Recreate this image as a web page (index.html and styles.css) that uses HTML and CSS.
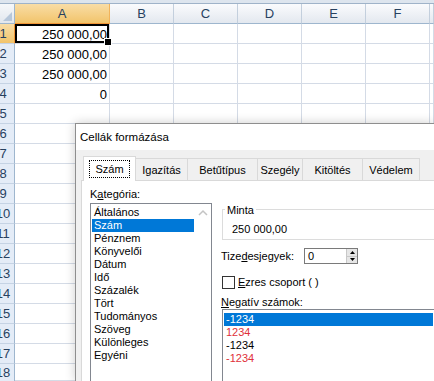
FILE: index.html
```html
<!DOCTYPE html>
<html lang="hu">
<head>
    <meta charset="UTF-8">
    <title>Cellák formázása</title>
    <link rel="stylesheet" href="styles.css">
</head>
<body>
    <div class="topbar"></div>

    <div class="sheet">
        <div class="corner"><svg width="14" height="19"><polygon points="12,8 12,17 3,17" fill="#b7c7da"/></svg></div>
        <div class="col sel">A</div><div class="col">B</div><div class="col">C</div><div class="col">D</div><div class="col">E</div><div class="col">F</div><div class="col"></div>

        <div class="row sel">1</div><div class="cell active">250 000,00</div><div class="cell"></div><div class="cell"></div><div class="cell"></div><div class="cell"></div><div class="cell"></div><div class="cell"></div>
        <div class="row">2</div><div class="cell">250 000,00</div><div class="cell"></div><div class="cell"></div><div class="cell"></div><div class="cell"></div><div class="cell"></div><div class="cell"></div>
        <div class="row">3</div><div class="cell">250 000,00</div><div class="cell"></div><div class="cell"></div><div class="cell"></div><div class="cell"></div><div class="cell"></div><div class="cell"></div>
        <div class="row">4</div><div class="cell">0</div><div class="cell"></div><div class="cell"></div><div class="cell"></div><div class="cell"></div><div class="cell"></div><div class="cell"></div>
        <div class="row">5</div><div class="cell"></div><div class="cell"></div><div class="cell"></div><div class="cell"></div><div class="cell"></div><div class="cell"></div><div class="cell"></div>
        <div class="row">6</div><div class="cell"></div><div class="cell"></div><div class="cell"></div><div class="cell"></div><div class="cell"></div><div class="cell"></div><div class="cell"></div>
        <div class="row">7</div><div class="cell"></div><div class="cell"></div><div class="cell"></div><div class="cell"></div><div class="cell"></div><div class="cell"></div><div class="cell"></div>
        <div class="row">8</div><div class="cell"></div><div class="cell"></div><div class="cell"></div><div class="cell"></div><div class="cell"></div><div class="cell"></div><div class="cell"></div>
        <div class="row">9</div><div class="cell"></div><div class="cell"></div><div class="cell"></div><div class="cell"></div><div class="cell"></div><div class="cell"></div><div class="cell"></div>
        <div class="row">10</div><div class="cell"></div><div class="cell"></div><div class="cell"></div><div class="cell"></div><div class="cell"></div><div class="cell"></div><div class="cell"></div>
        <div class="row">11</div><div class="cell"></div><div class="cell"></div><div class="cell"></div><div class="cell"></div><div class="cell"></div><div class="cell"></div><div class="cell"></div>
        <div class="row">12</div><div class="cell"></div><div class="cell"></div><div class="cell"></div><div class="cell"></div><div class="cell"></div><div class="cell"></div><div class="cell"></div>
        <div class="row">13</div><div class="cell"></div><div class="cell"></div><div class="cell"></div><div class="cell"></div><div class="cell"></div><div class="cell"></div><div class="cell"></div>
        <div class="row">14</div><div class="cell"></div><div class="cell"></div><div class="cell"></div><div class="cell"></div><div class="cell"></div><div class="cell"></div><div class="cell"></div>
        <div class="row">15</div><div class="cell"></div><div class="cell"></div><div class="cell"></div><div class="cell"></div><div class="cell"></div><div class="cell"></div><div class="cell"></div>
        <div class="row">16</div><div class="cell"></div><div class="cell"></div><div class="cell"></div><div class="cell"></div><div class="cell"></div><div class="cell"></div><div class="cell"></div>
        <div class="row">17</div><div class="cell"></div><div class="cell"></div><div class="cell"></div><div class="cell"></div><div class="cell"></div><div class="cell"></div><div class="cell"></div>
        <div class="row last">18</div><div class="cell"></div><div class="cell"></div><div class="cell"></div><div class="cell"></div><div class="cell"></div><div class="cell"></div><div class="cell"></div>
    </div>

    <div class="dialog">
        <div class="titlebar">Cellák formázása</div>
        <div class="dbody">
            <div class="tabs">
                <div class="tab on w-szam"><span class="focus">Szám</span></div>
                <div class="tab w-igaz">Igazítás</div>
                <div class="tab w-betu">Betűtípus</div>
                <div class="tab w-szeg">Szegély</div>
                <div class="tab w-kit">Kitöltés</div>
                <div class="tab w-ved">Védelem</div>
            </div>
            <div class="panel">
                <div class="left">
                    <div class="label">K<u>a</u>tegória:</div>
                    <div class="listbox">
                        <div class="items">
                            <div class="item">Általános</div>
                            <div class="item sel">Szám</div>
                            <div class="item">Pénznem</div>
                            <div class="item">Könyvelői</div>
                            <div class="item">Dátum</div>
                            <div class="item">Idő</div>
                            <div class="item">Százalék</div>
                            <div class="item">Tört</div>
                            <div class="item">Tudományos</div>
                            <div class="item">Szöveg</div>
                            <div class="item">Különleges</div>
                            <div class="item">Egyéni</div>
                        </div>
                        <div class="scroll">
                            <svg width="16" height="16"><path d="M4 11 L8 7 L12 11" fill="none" stroke="#c4c4c4" stroke-width="1.5"/></svg>
                        </div>
                    </div>
                </div>

                <div class="right">
                    <div class="groupbox">
                        <div class="grouptitle">Minta</div>
                        <div class="sample">250 000,00</div>
                    </div>

                    <div class="field">
                        <div class="field-label">Tize<u>d</u>esjegyek:</div>
                        <div class="spin">
                            <div class="spin-val">0</div>
                            <div class="spin-btns">
                                <div class="spin-btn"><svg width="9" height="6"><polygon points="2,5 7,5 4.5,2" fill="#000"/></svg></div>
                                <div class="spin-btn"><svg width="9" height="6"><polygon points="2,1 7,1 4.5,4" fill="#000"/></svg></div>
                            </div>
                        </div>
                    </div>

                    <div class="check">
                        <div class="box"></div>
                        <div><u>E</u>zres csoport ( )</div>
                    </div>

                    <div class="label neg-label"><u>N</u>egatív számok:</div>
                    <div class="listbox neg-list">
                        <div class="items neg-items">
                            <div class="item sel">-1234</div>
                            <div class="item red">1234</div>
                            <div class="item">-1234</div>
                            <div class="item red">-1234</div>
                        </div>
                    </div>
                </div>
            </div>
        </div>
    </div>
</body>
</html>
```

FILE: styles.css
```css
* {
    box-sizing: border-box;
}

body {
    margin: 0;
    width: 434px;
    height: 381px;
    overflow: hidden;
    position: relative;
    background: #fff;
    font-family: "Liberation Sans", Arial, sans-serif;
}

.topbar {
    height: 4px;
    background: #dde5ee;
    border-bottom: 1px solid #9fb3c9;
}

/* spreadsheet */
.sheet {
    display: grid;
    grid-template-columns: 15px 95px repeat(5, 64px) 1fr;
    grid-template-rows: repeat(18, 20px) 17px;
    font-size: 13px;
}

.corner {
    background: linear-gradient(#f6f8fa, #e2e7ee);
    border-right: 1px solid #9eb6ce;
    border-bottom: 1px solid #9eb6ce;
}

.corner svg {
    display: block;
}

.col {
    background: linear-gradient(#fafbfd, #e3e8ef);
    border-right: 1px solid #c3cfdd;
    border-bottom: 1px solid #9eb6ce;
    color: #27415f;
    text-align: center;
    line-height: 19px;
}

.col.sel {
    background: linear-gradient(#f9dda6, #f2c46b);
    border-right-color: #f2b35a;
    border-bottom-color: #f29536;
}

.row {
    display: flex;
    justify-content: center;
    padding-right: 8px;
    background: #e4ecf7;
    border-right: 1px solid #9eb6ce;
    border-bottom: 1px solid #c5d3e4;
    color: #27415f;
    line-height: 20px;
}

.row.last {
    line-height: 17px;
    border-bottom: none;
}

.row.sel {
    background: linear-gradient(#f9dda6, #f2c46b);
    border-right-color: #f29536;
}

.cell {
    border-right: 1px solid #d4dbe6;
    border-bottom: 1px solid #d4dbe6;
    text-align: right;
    padding: 1px 2px 0 0;
    line-height: 19px;
    color: #000;
}

.cell.active {
    position: relative;
    box-shadow: inset 0 0 0 2px #000;
}

.cell.active::after {
    content: "";
    position: absolute;
    right: -3px;
    bottom: -3px;
    width: 6px;
    height: 6px;
    background: #000;
    border: 1px solid #fff;
}

/* dialog */
.dialog {
    position: absolute;
    left: 75px;
    top: 123px;
    width: 359px;
    height: 258px;
    overflow: hidden;
    border: 1px solid #8e8e8e;
    border-right: none;
    border-bottom: none;
    background: #f0f0f0;
    box-shadow: 0 0 10px rgba(0, 0, 0, 0.2);
    font-size: 11px;
    color: #000;
}

.titlebar {
    height: 26px;
    background: #fff;
    padding-left: 4px;
    font-size: 11.5px;
    line-height: 26px;
}

.dbody {
    padding: 6px 0 0 5px;
}

.tabs {
    display: flex;
    align-items: flex-end;
    height: 24px;
    padding-left: 2px;
}

.tab {
    height: 22px;
    margin-left: -1px;
    border: 1px solid #d9d9d9;
    border-bottom: none;
    background: #f0f0f0;
    display: flex;
    align-items: center;
    justify-content: center;
}

.tab.on {
    height: 25px;
    margin-left: 0;
    margin-bottom: -1px;
    background: #fff;
    position: relative;
}

.focus {
    outline: 1px dotted #000;
    padding: 2px 5px;
    line-height: 12px;
}

.w-szam { width: 53px; }
.w-igaz { width: 53px; }
.w-betu { width: 71px; }
.w-szeg { width: 46px; }
.w-kit { width: 61px; }
.w-ved { width: 58px; }

.panel {
    display: flex;
    height: 210px;
    padding: 7px 0 0 8px;
    background: #fff;
    border: 1px solid #d9d9d9;
    border-right: none;
    border-bottom: none;
}

.left {
    width: 122px;
    flex: none;
}

.label {
    height: 13px;
    line-height: 13px;
}

.listbox {
    display: flex;
    margin-top: 2px;
    height: 190px;
    border: 1px solid #828790;
    border-bottom: none;
    background: #fff;
}

.items {
    flex: 1;
    padding: 2px 1px;
}

.item {
    line-height: 13px;
    padding-left: 2px;
    white-space: nowrap;
}

.item.sel {
    background: #0078d7;
    color: #fff;
}

.item.red {
    color: #e0303a;
}

.scroll {
    width: 16px;
}

.scroll svg {
    display: block;
}

.right {
    flex: 1;
    margin-left: 9px;
}

.groupbox {
    margin: 21px 0 0 1px;
    height: 31px;
    padding: 0 0 0 9px;
    border: 1px solid #dcdcdc;
    border-right: none;
}

.grouptitle {
    width: fit-content;
    margin: -6px 0 0 -7px;
    padding: 0 2px;
    background: #fff;
    line-height: 13px;
}

.sample {
    margin-top: 6px;
    line-height: 13px;
}

.field {
    display: flex;
    align-items: center;
    height: 16px;
    margin-top: 8px;
}

.field-label {
    width: 83px;
}

.spin {
    display: flex;
    width: 54px;
    height: 16px;
    border: 1px solid #7a7a7a;
    background: #fff;
}

.spin-val {
    flex: 1;
    padding-left: 3px;
    line-height: 14px;
}

.spin-btns {
    display: flex;
    flex-direction: column;
    width: 11px;
    border-left: 1px solid #c8c8c8;
}

.spin-btn {
    flex: 1;
    display: flex;
    align-items: center;
    justify-content: center;
    background: #e6e6e6;
    border-bottom: 1px solid #c8c8c8;
}

.spin-btn:last-child {
    border-bottom: none;
}

.spin-btn svg {
    display: block;
}

.check {
    display: flex;
    align-items: center;
    gap: 3px;
    height: 14px;
    margin: 11px 0 0 1px;
}

.box {
    width: 13px;
    height: 13px;
    border: 1px solid #333;
    background: #fff;
}

.neg-label {
    margin-top: 7px;
}

.neg-list {
    margin: 0 0 0 1px;
    height: 80px;
    border-right: none;
}

.neg-items {
    padding: 3px 1px;
}
```
